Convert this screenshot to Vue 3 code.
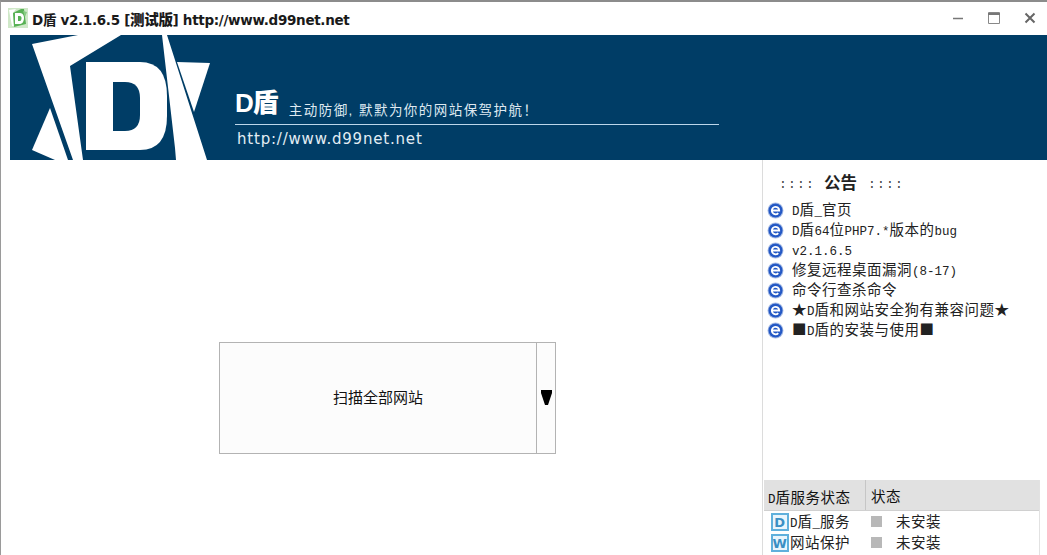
<script setup>
const split = (text) =>
  (text.match(/[\x21-\x7e]+|[^\x21-\x7e]+/g) || []).map((t) => ({
    t,
    latin: /^[\x21-\x7e]/.test(t)
  }))

const notices = [
  'D盾_官页',
  'D盾64位PHP7.*版本的bug',
  'v2.1.6.5',
  '修复远程桌面漏洞(8-17)',
  '命令行查杀命令',
  '★D盾和网站安全狗有兼容问题★',
  '■D盾的安装与使用■'
].map(split)
const headLabel = split('D盾服务状态')
const services = [
  { letter: 'D', name: split('D盾_服务') },
  { letter: 'W', name: split('网站保护') }
]
</script>

<template>
  <div class="win">
    <header class="titlebar">
      <svg class="appicon" viewBox="0 0 20 20" width="20" height="20">
        <rect x="0" y="0" width="20" height="20" fill="#cfe8c8" />
        <path d="M1 2l7-1-3 4 1 13-2 0z" fill="#fff" />
        <path d="M5 5l8-4 3 0 2 15-12 3z" fill="#58b155" />
        <path d="M7 5h5c3 0 4 3 4 5s-1 6-4 6H7z" fill="#fff" />
        <path d="M10 8h2c1 0 1.500 1 1.500 2s-.5 3-1.500 3h-2z" fill="#58b155" />
        <path d="M15 3l4 1-2 5z" fill="#8acb85" />
      </svg>
      <span class="title">D盾 v2.1.6.5 [<b class="cn">测试版</b>] http://www.d99net.net</span>
      <div class="controls">
        <svg width="12" height="12" viewBox="0 0 12 12"><path d="M1 6.500h10" stroke="#777" stroke-width="1.500" /></svg>
        <svg width="14" height="14" viewBox="0 0 14 14"><path d="M1.500 1.500h11v11h-11z" fill="none" stroke="#888" /><path d="M1 3h12" stroke="#777" stroke-width="2" /></svg>
        <svg width="12" height="12" viewBox="0 0 12 12"><path d="M1.500 1.500l9 9M10.500 1.500l-9 9" stroke="#666" stroke-width="2" /></svg>
      </div>
    </header>

    <section class="banner">
      <svg class="logo" viewBox="0 0 210 125" width="210" height="125">
        <path d="M22 9 68 0h43L60 31l13 94H63z" fill="#fff" />
        <path d="M40 73l18 52H45L22 115z" fill="#fff" />
        <path d="M152 0h5l40 125h-31l-1-12z" fill="#fff" />
        <path d="M76 27H130Q157 27 157 61v20Q157 115 130 115H76z" fill="#fff" />
        <path d="M103 47h12Q130 47 130 63v17Q130 96 115 96h-12z" fill="#003d66" />
        <path d="M167 27l33 1-16 49z" fill="#fff" />
      </svg>
      <div class="brand">
        <div class="brandrow">
          <span class="mark">D盾</span>
          <span class="slogan">主动防御, 默默为你的网站保驾护航！</span>
        </div>
        <div class="url">http://www.d99net.net</div>
      </div>
    </section>

    <main class="main">
      <div class="left">
        <div class="scan">
          <div class="scanmain">扫描全部网站</div>
          <div class="scanarrow">
            <svg width="11" height="15" viewBox="0 0 11 15"><path d="M0 0H11V3L7 15H4L0 3z" fill="#000" /></svg>
          </div>
        </div>
      </div>

      <aside class="side">
        <h2 class="heading"><span class="dots">::::</span><span class="gong">公告</span><span class="dots">::::</span></h2>
        <ul class="notices">
          <li v-for="(n, i) in notices" :key="i">
            <svg class="ie" width="17" height="17" viewBox="0 0 16 16">
              <circle cx="8" cy="8" r="7.500" fill="#a9bde6" />
              <circle cx="8" cy="8" r="6.600" fill="#2458c4" />
              <path d="M4.500 8H11.500A3.500 3.500 0 1 0 10.600 10.400" fill="none" stroke="#fff" stroke-width="1.700" />
            </svg>
            <span class="lift"><span v-for="(r, k) in n" :key="k" :class="{ latin: r.latin }">{{ r.t }}</span></span>
          </li>
        </ul>
        <div class="table">
          <div class="thead">
            <div class="th first"><span v-for="(r, k) in headLabel" :key="k" :class="{ latin: r.latin }">{{ r.t }}</span></div>
            <div class="th">状态</div>
          </div>
          <div v-for="s in services" :key="s.letter" class="row">
            <div class="cell first">
              <svg width="18" height="18" viewBox="0 0 18 18" class="svc">
                <rect x="1" y="1" width="16" height="16" fill="#e9f5fc" stroke="#5fb0dc" stroke-width="2" />
                <text x="9" y="14" text-anchor="middle" class="svcletter">{{ s.letter }}</text>
              </svg>
              <span class="lift"><span v-for="(r, k) in s.name" :key="k" :class="{ latin: r.latin }">{{ r.t }}</span></span>
            </div>
            <div class="cell state">
              <i class="dot"></i>
              <span class="lift">未安装</span>
            </div>
          </div>
        </div>
      </aside>
    </main>
  </div>
</template>

<style>
html, body { margin: 0; overflow: hidden; background: #fff; }
</style>

<style scoped>
.win {
  width: 1047px;
  height: 555px;
  box-sizing: border-box;
  border-top: 2px solid #8c8c8c;
  border-left: 1px solid #9a9a9a;
  display: flex;
  flex-direction: column;
  overflow: hidden;
  background: #fff;
  font-family: "Liberation Sans", "Noto Sans CJK SC", sans-serif;
  color: #111;
}
.titlebar {
  height: 33px;
  flex: none;
  display: flex;
  align-items: center;
  padding-left: 7px;
  padding-bottom: 1px;
  box-sizing: border-box;
}
.appicon { flex: none; margin-right: 4px; }
.title {
  font: bold 13.500px "DejaVu Sans", "Noto Sans CJK SC", sans-serif;
  letter-spacing: -0.310px;
  color: #1a1a1a;
  white-space: nowrap;
}
.cn { font-size: 14.500px; font-weight: 900; }
.controls {
  margin-left: auto;
  display: flex;
  align-items: center;
  gap: 23px;
  padding-right: 11px;
}
.banner {
  height: 125px;
  flex: none;
  margin-left: 9px;
  background: #003d66;
  display: flex;
  color: #fff;
}
.logo { flex: none; }
.brand {
  margin-left: 15px;
  width: 484px;
  padding-top: 50px;
  box-sizing: border-box;
}
.brandrow {
  display: flex;
  align-items: flex-end;
  height: 40px;
  border-bottom: 1px solid #bcd6ea;
  padding-bottom: 4px;
  box-sizing: border-box;
}
.mark { font-weight: 900; font-size: 26px; line-height: 30px; letter-spacing: -1px; margin: 0 11px 2px 0; white-space: nowrap; }
.slogan { font-size: 13.500px; line-height: 18px; letter-spacing: 1.450px; color: #dfe9f1; white-space: nowrap; }
.url {
  font: 15px "DejaVu Sans", sans-serif;
  letter-spacing: 0.800px;
  margin: 5px 0 0 2px;
  color: #e3edf4;
}
.main { flex: 1; display: flex; min-height: 0; }
.left { flex: 1; padding: 182px 0 0 218px; box-sizing: border-box; }
.scan {
  width: 337px;
  height: 112px;
  box-sizing: border-box;
  border: 1px solid #b3b3b3;
  display: flex;
  background: #fcfcfc;
}
.scanmain {
  flex: 1;
  display: flex;
  align-items: center;
  justify-content: center;
  font-size: 15px;
  padding-bottom: 3px;
  box-sizing: border-box;
}
.scanarrow {
  width: 19px;
  border-left: 1px solid #b3b3b3;
  display: flex;
  align-items: center;
  justify-content: center;
  padding-bottom: 2px;
  box-sizing: border-box;
}
.side {
  width: 285px;
  flex: none;
  border-left: 1px solid #dcdcdc;
  box-sizing: border-box;
  display: flex;
  flex-direction: column;
  padding-top: 13px;
  min-height: 0;
}
.heading {
  margin: 0 0 5px 16px;
  height: 22px;
  display: flex;
  align-items: center;
  font: bold 16.500px/22px "DejaVu Sans", "Noto Sans CJK SC", sans-serif;
  color: #222;
}
.dots { font: 13px "Liberation Mono", monospace; letter-spacing: 1.200px; color: #444; }
.gong { margin: 0 11px 0 9px; }
.notices {
  list-style: none;
  margin: 0 0 0 4px;
  padding: 0;
  flex: 1;
  font-family: "Noto Sans CJK SC", sans-serif;
  font-size: 14.500px;
  letter-spacing: 0.500px;
  color: #222;
}
.notices li { display: flex; align-items: center; height: 20px; white-space: nowrap; }
.lift { margin-bottom: 3px; }
.latin { font: 12.500px "Liberation Mono", monospace; letter-spacing: 0; }
.ie { flex: none; margin: 0 8px 0 0; }
.table { margin: 0 7px 0 1px; font-family: "Noto Sans CJK SC", sans-serif; font-size: 14.500px; letter-spacing: 0.500px; border-right: 1px solid #e2e2e2; height: 75px; flex: none; }
.thead { display: flex; height: 31px; background: #e1e1e1; border-bottom: 1px solid #d0d0d0; box-sizing: border-box; }
.th { display: flex; align-items: center; padding-left: 5px; }
.first { width: 102px; box-sizing: border-box; flex: none; }
.th.first { display: block; line-height: 33px; padding-left: 4px; border-right: 1px solid #c6c6c6; }
.row { display: flex; height: 21px; align-items: center; }
.cell { display: flex; align-items: center; color: #222; white-space: nowrap; }
.cell.first { padding-left: 7px; gap: 1px; }
.svc { flex: none; }
.svcletter { font: bold 13px "DejaVu Sans", sans-serif; fill: #3a8fc4; }
.state { padding-left: 5px; }
.dot { display: block; width: 11px; height: 11px; background: #b8b8b8; margin-right: 14px; }
</style>
